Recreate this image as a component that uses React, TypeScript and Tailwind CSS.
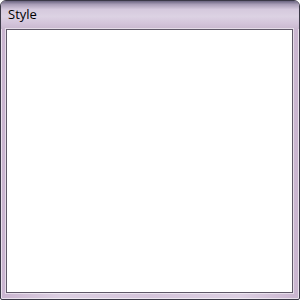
export default function App() {
  return (
    <div className="w-[300px] h-[300px] bg-white">
      <div className="w-[300px] h-[300px] rounded-t-[6px] rounded-b-[2px] border border-[#3b3947] bg-[linear-gradient(90deg,#c9b4cf_0%,#dccfe2_20%,#d4c4da_50%,#dccfe2_80%,#c9b4cf_100%)] flex flex-col overflow-hidden shadow-[inset_0_0_0_1px_rgba(255,255,255,0.6)]">
        <div className="h-[28px] shrink-0 bg-[linear-gradient(180deg,#6a6480_0%,#a89db6_12%,#d5c9dd_30%,#dcd2e3_55%,#d3c4da_80%,#c9b8cf_100%)] flex items-start pl-[7px] pt-[5px]">
          <span className="text-[13px] leading-[16px] text-black" style={{ fontFamily: '"Open Sans", "Noto Sans", sans-serif' }}>
            Style
          </span>
        </div>
        <div className="flex-1 pl-[5px] pr-[6px] pb-[6px] pt-0 flex">
          <div className="flex-1 border border-[#5f5868] bg-white shadow-[0_0_0_1px_rgba(255,255,255,0.5)]" />
        </div>
      </div>
    </div>
  );
}
